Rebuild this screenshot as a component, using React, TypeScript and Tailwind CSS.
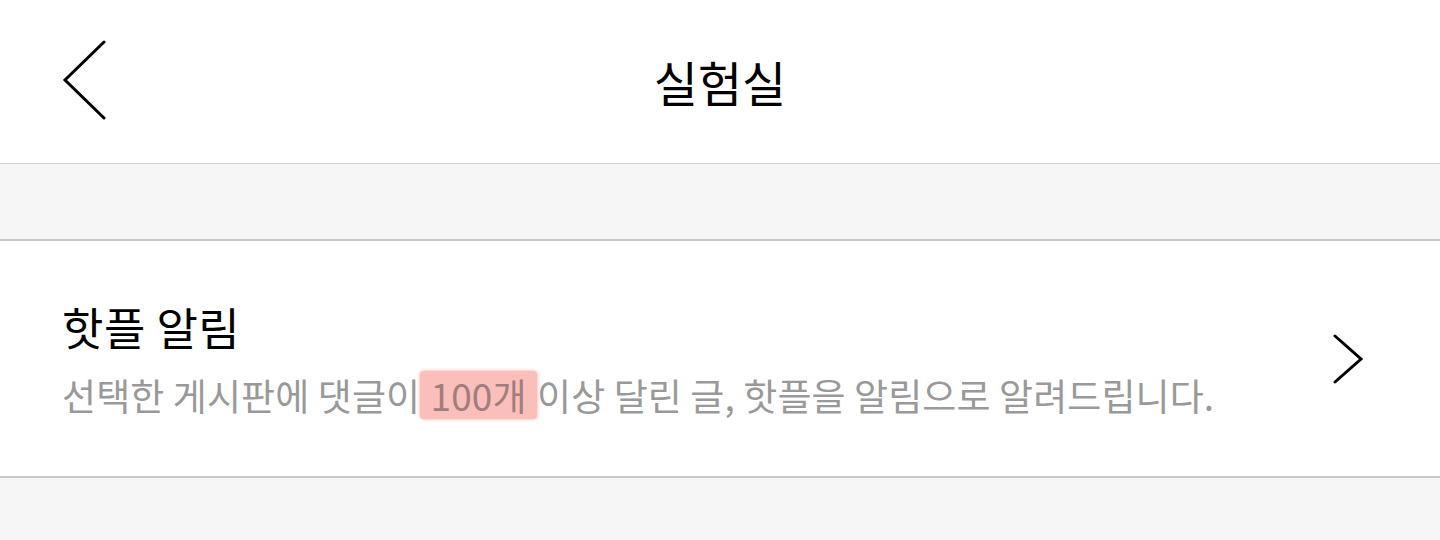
import React from "react";

const font = { fontFamily: '"Noto Sans CJK KR", "Noto Sans", sans-serif' };

function BackIcon() {
  return (
    <svg width="48" height="80" viewBox="0 0 48 80" fill="none">
      <path d="M43 2 L4 40 L43 78" stroke="#000" strokeWidth="3" strokeLinecap="round" strokeLinejoin="miter" />
    </svg>
  );
}

function ChevronRight() {
  return (
    <svg width="32" height="50" viewBox="0 0 32 50" fill="none">
      <path d="M3 2 L29 25 L3 48" stroke="#000" strokeWidth="3" strokeLinecap="round" />
    </svg>
  );
}

export default function App() {
  return (
    <div className="w-[1440px] h-[540px] bg-[#f6f6f6] overflow-hidden" style={font}>
      <header className="relative h-[164px] bg-white border-b border-[#cfcfcf] flex items-center justify-center">
        <div className="absolute left-[61px] top-[40px]">
          <BackIcon />
        </div>
        <h1 className="text-[48px] font-normal text-black leading-none -mt-[2px]">실험실</h1>
      </header>
      <div className="h-[77px] border-b-2 border-[#c8c8c8]" />
      <section className="h-[237px] bg-white border-b-2 border-[#c8c8c8] flex items-center pl-[62px] pr-[76px]">
        <div className="flex-1 mt-[6px]">
          <div className="text-[45px] text-black leading-none tracking-[0.5px]">핫플 알림</div>
          <div className="mt-[22px] text-[37px] text-[#999] leading-[48px] whitespace-nowrap tracking-[0.1px]">
            선택한 게시판에 댓글이
            <span className="inline-block h-[48px] leading-[48px] align-top bg-[#fbbfbb] text-[#a27d7d] px-[2px] rounded-[4px] shadow-[0_0_3px_1px_#fcc9c5] whitespace-pre"> 100개 </span>
            이상 달린 글, 핫플을 알림으로 알려드립니다.
          </div>
        </div>
        <ChevronRight />
      </section>
    </div>
  );
}
